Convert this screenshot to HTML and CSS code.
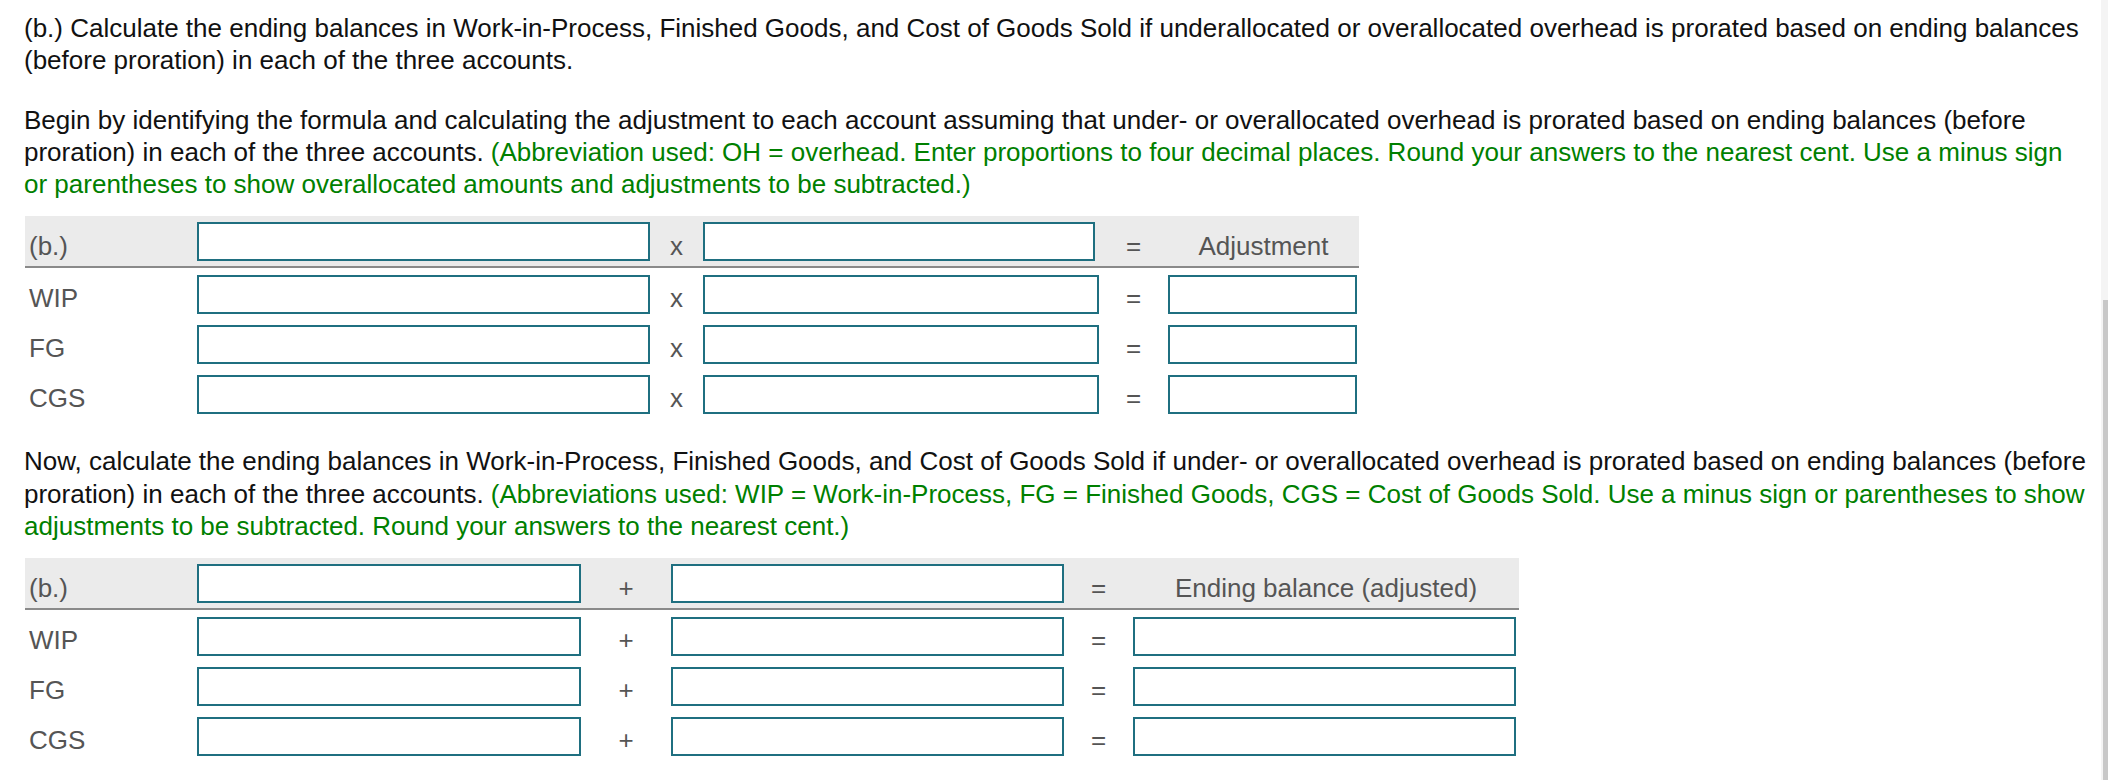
FILE: index.html
```html
<!DOCTYPE html>
<html lang="en">
<head>
<meta charset="utf-8">
<title>Prorating overhead</title>
<link rel="stylesheet" href="styles.css">
</head>
<body>
<div class="page">
  <p class="q">(b.) Calculate the ending balances in Work-in-Process, Finished Goods, and Cost of Goods Sold if underallocated or overallocated overhead is prorated based on ending balances (before proration) in each of the three accounts.</p>
  <p class="q lead">Begin by identifying the formula and calculating the adjustment to each account assuming that under- or overallocated overhead is prorated based on ending balances (before proration) in each of the three accounts. <span class="hint">(Abbreviation used: OH = overhead. Enter proportions to four decimal places. Round your answers to the nearest cent. Use a minus sign or parentheses to show overallocated amounts and adjustments to be subtracted.)</span></p>

  <table class="grid t1">
    <colgroup>
      <col class="c-label"><col class="c-in1"><col class="c-op1"><col class="c-in2"><col class="c-op2"><col class="c-in3">
    </colgroup>
    <thead>
      <tr>
        <th class="label">(b.)</th>
        <th class="cell"><input class="field" type="text" aria-label="Proration base"></th>
        <th class="op">x</th>
        <th class="cell"><input class="field short" type="text" aria-label="Amount"></th>
        <th class="op">=</th>
        <th class="op title">Adjustment</th>
      </tr>
    </thead>
    <tbody>
      <tr>
        <td class="label">WIP</td>
        <td class="cell"><input class="field" type="text" aria-label="WIP proportion"></td>
        <td class="op">x</td>
        <td class="cell"><input class="field" type="text" aria-label="WIP amount"></td>
        <td class="op">=</td>
        <td class="cell"><input class="field last" type="text" aria-label="WIP adjustment"></td>
      </tr>
      <tr>
        <td class="label">FG</td>
        <td class="cell"><input class="field" type="text" aria-label="FG proportion"></td>
        <td class="op">x</td>
        <td class="cell"><input class="field" type="text" aria-label="FG amount"></td>
        <td class="op">=</td>
        <td class="cell"><input class="field last" type="text" aria-label="FG adjustment"></td>
      </tr>
      <tr>
        <td class="label">CGS</td>
        <td class="cell"><input class="field" type="text" aria-label="CGS proportion"></td>
        <td class="op">x</td>
        <td class="cell"><input class="field" type="text" aria-label="CGS amount"></td>
        <td class="op">=</td>
        <td class="cell"><input class="field last" type="text" aria-label="CGS adjustment"></td>
      </tr>
    </tbody>
  </table>

  <p class="q lead">Now, calculate the ending balances in Work-in-Process, Finished Goods, and Cost of Goods Sold if under- or overallocated overhead is prorated based on ending balances (before proration) in each of the three accounts. <span class="hint">(Abbreviations used: WIP = Work-in-Process, FG = Finished Goods, CGS = Cost of Goods Sold. Use a minus sign or parentheses to show adjustments to be subtracted. Round your answers to the nearest cent.)</span></p>

  <table class="grid t2">
    <colgroup>
      <col class="c-label"><col class="c-in1"><col class="c-op1"><col class="c-in2"><col class="c-op2"><col class="c-in3">
    </colgroup>
    <thead>
      <tr>
        <th class="label">(b.)</th>
        <th class="cell"><input class="field" type="text" aria-label="Balance before proration"></th>
        <th class="op">+</th>
        <th class="cell"><input class="field" type="text" aria-label="Adjustment"></th>
        <th class="op">=</th>
        <th class="op title">Ending balance (adjusted)</th>
      </tr>
    </thead>
    <tbody>
      <tr>
        <td class="label">WIP</td>
        <td class="cell"><input class="field" type="text" aria-label="WIP balance"></td>
        <td class="op">+</td>
        <td class="cell"><input class="field" type="text" aria-label="WIP adjustment"></td>
        <td class="op">=</td>
        <td class="cell"><input class="field last" type="text" aria-label="WIP ending balance"></td>
      </tr>
      <tr>
        <td class="label">FG</td>
        <td class="cell"><input class="field" type="text" aria-label="FG balance"></td>
        <td class="op">+</td>
        <td class="cell"><input class="field" type="text" aria-label="FG adjustment"></td>
        <td class="op">=</td>
        <td class="cell"><input class="field last" type="text" aria-label="FG ending balance"></td>
      </tr>
      <tr>
        <td class="label">CGS</td>
        <td class="cell"><input class="field" type="text" aria-label="CGS balance"></td>
        <td class="op">+</td>
        <td class="cell"><input class="field" type="text" aria-label="CGS adjustment"></td>
        <td class="op">=</td>
        <td class="cell"><input class="field last" type="text" aria-label="CGS ending balance"></td>
      </tr>
    </tbody>
  </table>
</div>
<div class="scroll-track"><div class="scroll-thumb"></div></div>
</body>
</html>
```

FILE: styles.css
```css
html, body {
  margin: 0;
  padding: 0;
  background: #ffffff;
  overflow: hidden;
}

body {
  font-family: "Liberation Sans", Arial, sans-serif;
  font-size: 26px;
  color: #111111;
}

.page {
  padding: 12px 18.5px 0 24px;
}

.q {
  margin: 0 0 27px;
  line-height: 32.3px;
}

.q.lead {
  margin-bottom: 16px;
}

.hint {
  color: #008000;
}

.grid {
  border-collapse: separate;
  border-spacing: 0;
  table-layout: fixed;
  margin: 0 0 27px 1px;
  color: #555555;
  font-size: 26px;
}

.grid thead tr {
  height: 52px;
}

.grid tbody tr {
  height: 50px;
}

.grid th,
.grid td {
  padding: 0;
  vertical-align: top;
  font-weight: normal;
  line-height: 33px;
}

.grid th {
  background: #ebebeb;
  border-bottom: 2px solid #8a8a8a;
}

.grid .label {
  text-align: left;
  padding: 14px 0 0 4px;
}

.grid .op {
  text-align: center;
  padding-top: 14px;
}

.grid th.label,
.grid th.op {
  padding-top: 14px;
}

.grid td.cell {
  padding-top: 7px;
}

.grid th.cell {
  padding-top: 6px;
}

.field {
  display: block;
  box-sizing: border-box;
  width: 100%;
  height: 39px;
  margin: 0;
  padding: 0 6px;
  border: 2px solid #1f6f80;
  border-radius: 0;
  background: #ffffff;
  font: inherit;
  color: #111111;
  outline: none;
}

.field.last {
  width: calc(100% - 2px);
}

/* table 1 columns */
.t1 .c-label { width: 172px; }
.t1 .c-in1 { width: 453px; }
.t1 .c-op1 { width: 53px; }
.t1 .c-in2 { width: 396px; }
.t1 .c-op2 { width: 69px; }
.t1 .c-in3 { width: 191px; }
.t1 { width: 1334px; }
.t1 .field.short { width: 392px; }

/* table 2 columns */
.t2 .c-label { width: 172px; }
.t2 .c-in1 { width: 384px; }
.t2 .c-op1 { width: 90px; }
.t2 .c-in2 { width: 393px; }
.t2 .c-op2 { width: 69px; }
.t2 .c-in3 { width: 386px; }
.t2 { width: 1494px; }
.t2 .field.last { width: calc(100% - 3px); }

.scroll-track {
  position: fixed;
  top: 0;
  right: 0;
  width: 7px;
  height: 100%;
  background: #f4f4f4;
}

.scroll-thumb {
  position: absolute;
  top: 300px;
  right: 0;
  width: 5px;
  height: 480px;
  background: #c8c8c8;
}
```
